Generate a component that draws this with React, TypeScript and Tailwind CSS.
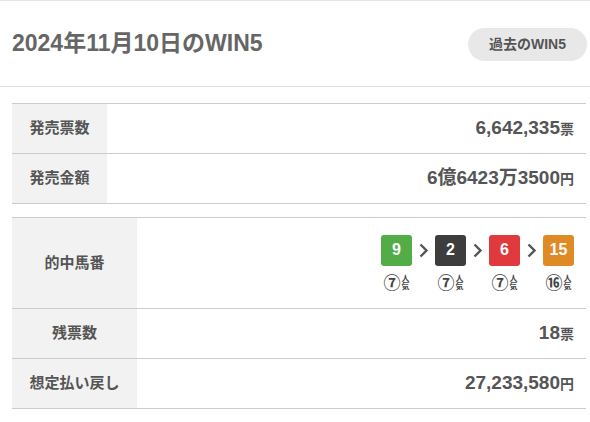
import React from "react";

const FONT = { fontFamily: '"Liberation Sans", Arial, "Noto Sans CJK JP", sans-serif' };

function Chevron() {
  return (
    <svg width="11" height="15" viewBox="0 0 11 15" className="mx-[6px]">
      <path d="M2.5 1.5 L8.5 7.5 L2.5 13.5" fill="none" stroke="#555" strokeWidth="2.4" />
    </svg>
  );
}

function Horse({ num, color, pop }: { num: string; color: string; pop: string }) {
  return (
    <div className="flex flex-col items-center w-[31px]">
      <div
        className={`w-[31px] h-[31px] rounded-[3px] flex items-center justify-center text-white font-bold text-[16px] ${color}`}
      >
        {num}
      </div>
      <div className="flex items-center mt-[9px] h-[17px] text-[#444]">
        <span className="text-[17px] leading-none">{pop}</span>
        <span className="flex flex-col text-[8px] leading-[8px] ml-[1px]">
          <span>人</span>
          <span>気</span>
        </span>
      </div>
    </div>
  );
}

function Row({ label, w, h, children }: { label: string; w: string; h: string; children: React.ReactNode }) {
  return (
    <div className={`flex border-b border-[#cccccc] ${h}`}>
      <div className={`${w} bg-[#f2f2f2] flex items-center justify-center text-[15px] font-bold text-[#555]`}>{label}</div>
      <div className="flex-1 flex items-center justify-end pr-3 text-[#555] font-bold">{children}</div>
    </div>
  );
}

function Val({ n, u }: { n: string; u: string }) {
  return (
    <span className="flex items-baseline">
      <span className="text-[19px]">{n}</span>
      <span className="text-[14px]">{u}</span>
    </span>
  );
}

export default function App() {
  return (
    <div className="w-[590px] h-[422px] bg-white border-t border-[#e5e5e5] overflow-hidden" style={FONT}>
      <div className="flex items-center justify-between h-[86px] pl-3 pr-[3px] border-b border-[#dddddd]">
        <h1 className="text-[23px] text-[#666] font-bold">2024年11月10日のWIN5</h1>
        <div className="h-[33px] rounded-full bg-[#e8e8e8] px-[21px] flex items-center text-[14px] font-bold text-[#555] mt-[1px]">
          過去のWIN5
        </div>
      </div>
      <div className="pl-3 pr-1 pt-4">
        <div className="border-t border-[#cccccc]">
          <Row label="発売票数" w="w-[95px]" h="h-[50px]">
            <Val n="6,642,335" u="票" />
          </Row>
          <Row label="発売金額" w="w-[95px]" h="h-[50px]">
            <Val n="6億6423万3500" u="円" />
          </Row>
        </div>
        <div className="border-t border-[#cccccc] mt-[13px]">
          <Row label="的中馬番" w="w-[125px]" h="h-[91px]">
            <div className="flex items-start">
              <Horse num="9" color="bg-[#52ad46]" pop="⑦" />
              <div className="h-[31px] flex items-center"><Chevron /></div>
              <Horse num="2" color="bg-[#3d3d3d]" pop="⑦" />
              <div className="h-[31px] flex items-center"><Chevron /></div>
              <Horse num="6" color="bg-[#e0393e]" pop="⑦" />
              <div className="h-[31px] flex items-center"><Chevron /></div>
              <Horse num="15" color="bg-[#e08a25]" pop="⑯" />
            </div>
          </Row>
          <Row label="残票数" w="w-[125px]" h="h-[50px]">
            <Val n="18" u="票" />
          </Row>
          <Row label="想定払い戻し" w="w-[125px]" h="h-[50px]">
            <Val n="27,233,580" u="円" />
          </Row>
        </div>
      </div>
    </div>
  );
}
